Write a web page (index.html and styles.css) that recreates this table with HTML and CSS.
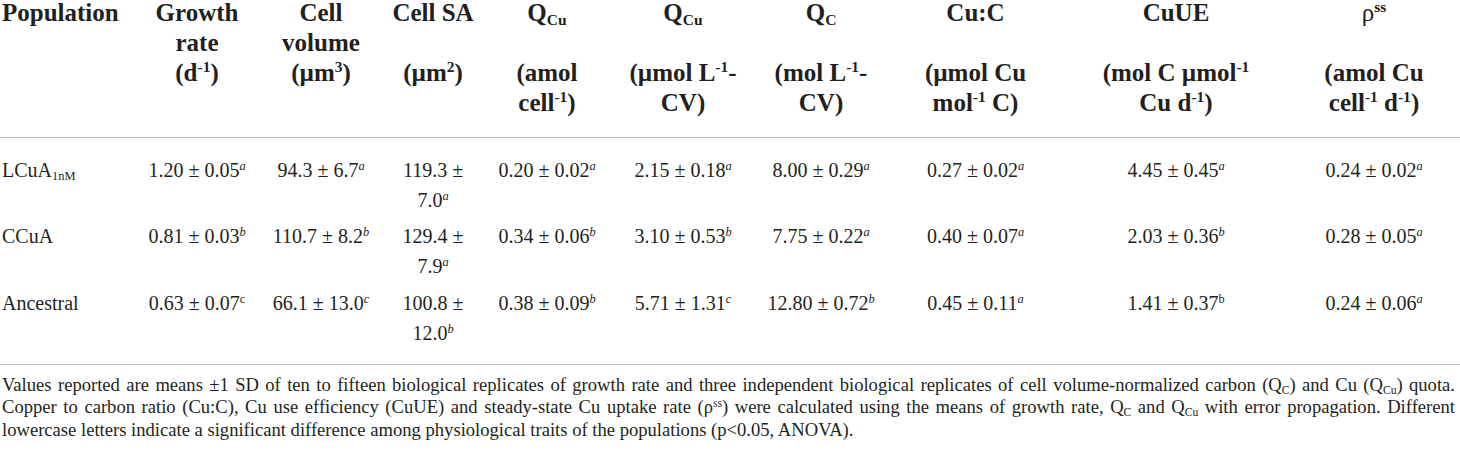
FILE: index.html
```html
<!DOCTYPE html>
<html>
<head>
<meta charset="utf-8">
<link rel="stylesheet" href="styles.css">
</head>
<body>
<table class="tbl">
  <colgroup>
    <col class="c-pop"><col class="c-gr"><col class="c-cv"><col class="c-sa"><col class="c-q1"><col class="c-q2"><col class="c-qc"><col class="c-cuc"><col class="c-cue"><col class="c-rho">
  </colgroup>
  <thead>
    <tr>
      <th class="pop">Population</th>
      <th>Growth<br>rate<br>(d<sup>-1</sup>)</th>
      <th>Cell<br>volume<br>(µm<sup>3</sup>)</th>
      <th>Cell SA<br><br>(µm<sup>2</sup>)</th>
      <th>Q<sub>Cu</sub><br><br>(amol<br>cell<sup>-1</sup>)</th>
      <th>Q<sub>Cu</sub><br><br>(µmol L<sup>-1</sup>-<br>CV)</th>
      <th>Q<sub>C</sub><br><br>(mol L<sup>-1</sup>-<br>CV)</th>
      <th>Cu:C<br><br>(µmol Cu<br>mol<sup>-1</sup> C)</th>
      <th>CuUE<br><br>(mol C µmol<sup>-1</sup><br>Cu d<sup>-1</sup>)</th>
      <th><span class="rho">ρ</span><sup>ss</sup><br><br>(amol Cu<br>cell<sup>-1</sup> d<sup>-1</sup>)</th>
    </tr>
  </thead>
  <tbody>
    <tr>
      <td class="pop">LCuA<sub>1nM</sub></td>
      <td>1.20 ± 0.05<sup class="i">a</sup></td>
      <td>94.3 ± 6.7<sup class="i">a</sup></td>
      <td>119.3 ± 7.0<sup class="i">a</sup></td>
      <td>0.20 ± 0.02<sup class="i">a</sup></td>
      <td>2.15 ± 0.18<sup class="i">a</sup></td>
      <td>8.00 ± 0.29<sup class="i">a</sup></td>
      <td>0.27 ± 0.02<sup class="i">a</sup></td>
      <td>4.45 ± 0.45<sup class="i">a</sup></td>
      <td>0.24 ± 0.02<sup class="i">a</sup></td>
    </tr>
    <tr>
      <td class="pop">CCuA</td>
      <td>0.81 ± 0.03<sup class="i">b</sup></td>
      <td>110.7 ± 8.2<sup class="i">b</sup></td>
      <td>129.4 ± 7.9<sup class="i">a</sup></td>
      <td>0.34 ± 0.06<sup class="i">b</sup></td>
      <td>3.10 ± 0.53<sup class="i">b</sup></td>
      <td>7.75 ± 0.22<sup class="i">a</sup></td>
      <td>0.40 ± 0.07<sup class="i">a</sup></td>
      <td>2.03 ± 0.36<sup class="i">b</sup></td>
      <td>0.28 ± 0.05<sup class="i">a</sup></td>
    </tr>
    <tr>
      <td class="pop">Ancestral</td>
      <td>0.63 ± 0.07<sup>c</sup></td>
      <td>66.1 ± 13.0<sup class="i">c</sup></td>
      <td>100.8 ± 12.0<sup class="i">b</sup></td>
      <td>0.38 ± 0.09<sup class="i">b</sup></td>
      <td>5.71 ± 1.31<sup class="i">c</sup></td>
      <td>12.80 ± 0.72<sup class="i">b</sup></td>
      <td>0.45 ± 0.11<sup class="i">a</sup></td>
      <td>1.41 ± 0.37<sup>b</sup></td>
      <td>0.24 ± 0.06<sup class="i">a</sup></td>
    </tr>
  </tbody>
</table>
<p class="note">
  <span class="ln just">Values reported are means ±1 SD of ten to fifteen biological replicates of growth rate and three independent biological replicates of cell volume-normalized carbon (Q<sub>C</sub>) and Cu (Q<sub>Cu</sub>) quota.</span>
  <span class="ln just">Copper to carbon ratio (Cu:C), Cu use efficiency (CuUE) and steady-state Cu uptake rate (ρ<sup>ss</sup>) were calculated using the means of growth rate, Q<sub>C</sub> and Q<sub>Cu</sub> with error propagation. Different</span>
  <span class="ln">lowercase letters indicate a significant difference among physiological traits of the populations (p&lt;0.05, ANOVA).</span>
</p>
</body>
</html>
```

FILE: styles.css
```css
html, body {
  margin: 0;
  padding: 0;
  background: #ffffff;
}

body {
  width: 1460px;
  color: #231f20;
  font-family: "Liberation Serif", "Times New Roman", serif;
}

.tbl {
  width: 1460px;
  table-layout: fixed;
  border-collapse: collapse;
  margin-top: -2px;
}

.c-pop { width: 135px; }
.c-gr { width: 124px; }
.c-cv { width: 124px; }
.c-sa { width: 100px; }
.c-q1 { width: 128px; }
.c-q2 { width: 144px; }
.c-qc { width: 132px; }
.c-cuc { width: 177px; }
.c-cue { width: 224px; }
.c-rho { width: 172px; }

.tbl th {
  font-size: 25px;
  line-height: 30px;
  font-weight: bold;
  text-align: center;
  vertical-align: top;
  padding: 0 0 19px;
  border-bottom: 1px solid #b8b8b8;
  white-space: nowrap;
}

.tbl td {
  font-size: 20px;
  line-height: 30px;
  text-align: center;
  vertical-align: top;
  padding: 3.25px 4px;
}

.tbl tbody tr:first-child td {
  padding-top: 16.5px;
}

.tbl tbody tr:last-child td {
  padding-bottom: 16.5px;
  border-bottom: 1px solid #b8b8b8;
}

.tbl .pop {
  text-align: left;
  padding-left: 2px;
}

.rho {
  font-weight: normal;
}

sup, sub {
  font-size: 0.62em;
  line-height: 1;
}

sup {
  vertical-align: 0.55em;
}

sub {
  vertical-align: -0.25em;
}

sup.i {
  font-style: italic;
}

.note {
  margin: 0;
  padding-top: 9px;
  font-size: 18.6px;
  line-height: 22px;
}

.ln {
  display: block;
  padding-left: 2px;
  width: 1453px;
}

.ln.just {
  text-align: justify;
  text-align-last: justify;
}
```
